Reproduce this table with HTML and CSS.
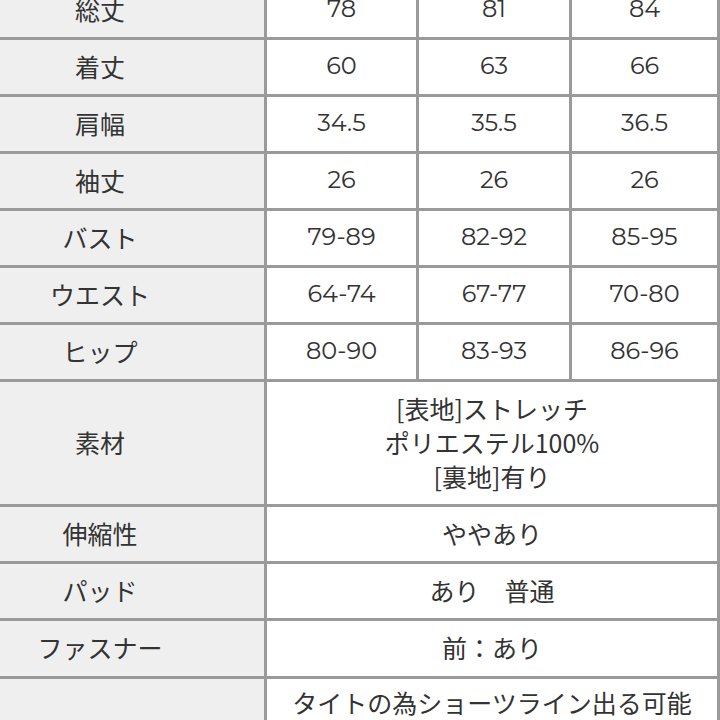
FILE: index.html
```html
<!DOCTYPE html>
<html lang="ja">
<head>
<meta charset="utf-8">
<link rel="stylesheet" href="styles.css">
</head>
<body>
<div class="sheet">
  <div class="head">総丈</div><div class="cell">78</div><div class="cell">81</div><div class="cell">84</div>
  <div class="head">着丈</div><div class="cell">60</div><div class="cell">63</div><div class="cell">66</div>
  <div class="head">肩幅</div><div class="cell">34.5</div><div class="cell">35.5</div><div class="cell">36.5</div>
  <div class="head">袖丈</div><div class="cell">26</div><div class="cell">26</div><div class="cell">26</div>
  <div class="head">バスト</div><div class="cell">79-89</div><div class="cell">82-92</div><div class="cell">85-95</div>
  <div class="head">ウエスト</div><div class="cell">64-74</div><div class="cell">67-77</div><div class="cell">70-80</div>
  <div class="head">ヒップ</div><div class="cell">80-90</div><div class="cell">83-93</div><div class="cell">86-96</div>
  <div class="head">素材</div><div class="cell wide">[表地]ストレッチ<br>ポリエステル100%<br>[裏地]有り</div>
  <div class="head">伸縮性</div><div class="cell wide">ややあり</div>
  <div class="head">パッド</div><div class="cell wide">あり　普通</div>
  <div class="head">ファスナー</div><div class="cell wide">前：あり</div>
  <div class="head"></div><div class="cell wide top">タイトの為ショーツライン出る可能</div>
</div>
</body>
</html>
```

FILE: styles.css
```css
html, body {
  margin: 0;
  padding: 0;
  background: #ffffff;
  overflow: hidden;
}
body {
  width: 720px;
  height: 720px;
}
.sheet {
  margin-top: -17px;
  margin-left: -64px;
  width: 784px;
  display: grid;
  grid-template-columns: 328px 149px 150px 145px;
  grid-template-rows: repeat(7, 54px) 122px 54px 54px 55px 44px;
  column-gap: 3px;
  row-gap: 3px;
  background: #9a9a9a;
  padding-right: 3px;
  box-sizing: border-box;
  font-family: "Montserrat", "Open Sans", "Noto Sans CJK JP", sans-serif;
  font-size: 24px;
  color: #333333;
}
.head,
.cell {
  display: flex;
  align-items: center;
  justify-content: center;
  text-align: center;
  line-height: 34px;
  padding-bottom: 3px;
}
.head {
  background: #efefef;
  font-family: "Noto Sans CJK JP", sans-serif;
  font-size: 25px;
}
.cell {
  background: #ffffff;
}
.wide {
  grid-column: span 3;
  font-family: "Noto Sans CJK JP", sans-serif;
  font-size: 25px;
}
.top {
  align-items: flex-start;
  padding-top: 6px;
  padding-bottom: 0;
  overflow: hidden;
}
```
